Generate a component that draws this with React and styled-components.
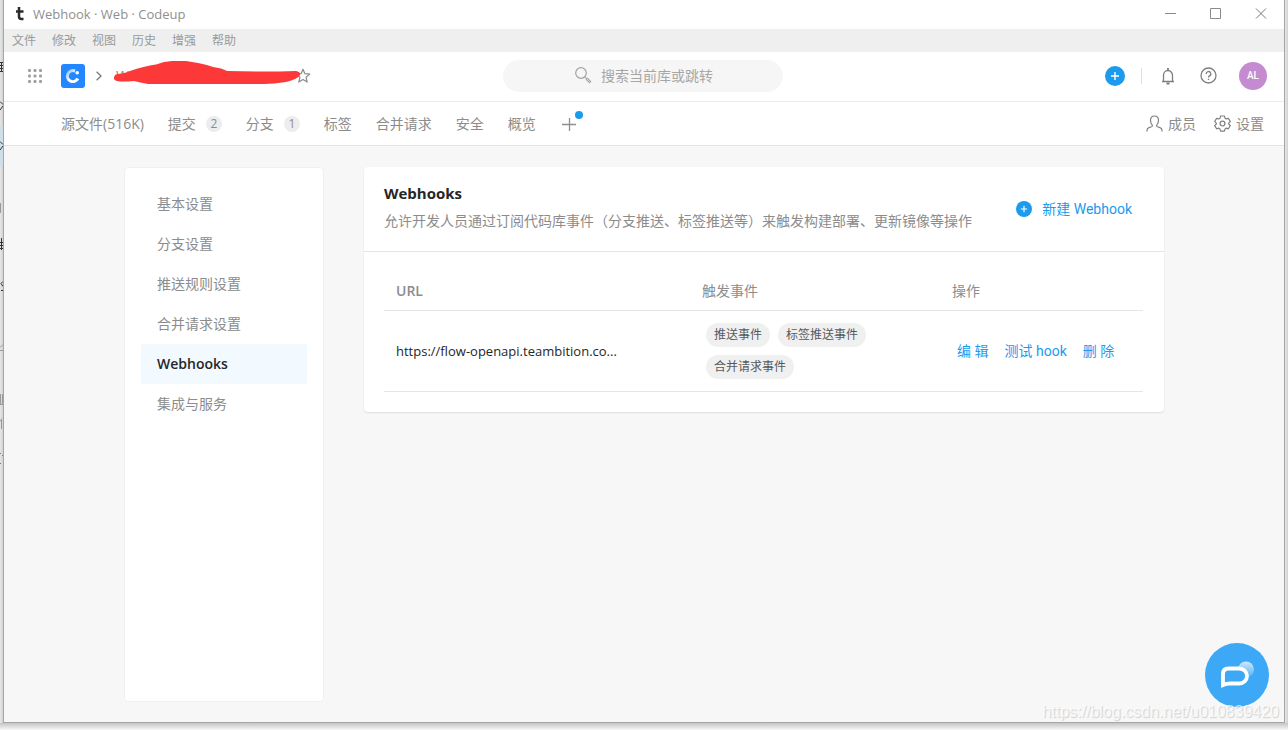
import React, { useState } from 'react';
import styled, { createGlobalStyle } from 'styled-components';

const GlobalStyle = createGlobalStyle`
  * {
    box-sizing: border-box;
  }
  body {
    margin: 0;
    background: #e6e6e6;
    color: #8c8c8c;
    font-family: 'Open Sans', 'Noto Sans CJK SC', sans-serif;
    font-size: 14px;
    line-height: 20px;
  }
  button, input {
    font: inherit;
    color: inherit;
    padding: 0;
    border: none;
    background: none;
  }
  button {
    cursor: pointer;
  }
  a {
    color: inherit;
    text-decoration: none;
  }
  h1, p {
    margin: 0;
  }
`;

const Desktop = styled.div`
  display: grid;
  grid-template-columns: 3px 1fr 3px;
  min-height: 100vh;
  padding-bottom: 7px;
  background: linear-gradient(to top, #f8f8f8, #c4c4c4 7px, #e2e2e2 7px);
`;

const BehindWindow = styled.div`
  overflow: hidden;
  background: linear-gradient(to right, #e6e6e6, #d2d2d2);
`;

const Window = styled.div`
  position: relative;
  display: flex;
  flex-direction: column;
  min-width: 0;
  border: 1px solid #a6a6a6;
  border-top: none;
  background: #f7f7f7;
`;

const TitleBar = styled.div`
  display: flex;
  align-items: center;
  height: 29px;
  padding: 0 17px 2px 12px;
  background: #fff;
  color: #8f8f8f;
  font-size: 13px;
`;

const AppMark = styled.svg`
  width: 8px;
  height: 14px;
  margin-right: 9px;
`;

const WindowButtons = styled.div`
  display: flex;
  gap: 34px;
  margin-left: auto;
`;

const IconButton = styled.button`
  display: flex;
  align-items: center;
`;

const MenuBar = styled.nav`
  display: flex;
  align-items: center;
  gap: 16px;
  height: 23px;
  padding: 0 8px;
  background: #efefef;
  color: #9a9a9a;
  font-size: 12px;
`;

const Header = styled.header`
  display: grid;
  grid-template-columns: 1fr 280px 1fr;
  align-items: center;
  height: 50px;
  padding: 0 17px 2px 15px;
  border-bottom: 1px solid #ebebeb;
  background: #fff;
`;

const Breadcrumb = styled.div`
  display: flex;
  align-items: center;
  padding-left: 9px;
`;

const CodeupLogo = styled.svg`
  width: 24px;
  height: 24px;
  margin: 0 11px 0 19px;
`;

const RepoName = styled.div`
  position: relative;
  display: flex;
  align-items: center;
  height: 28px;
  width: 195px;
  margin-left: 14px;
`;

const Scribble = styled.svg`
  position: absolute;
  left: -2px;
  top: -2px;
`;

const StarButton = styled(IconButton)`
  margin-left: auto;
`;

const SearchBox = styled.label`
  display: flex;
  align-items: center;
  gap: 9px;
  height: 32px;
  padding-left: 72px;
  border-radius: 16px;
  background: #f6f6f6;
  color: #a6a6a6;
`;

const SearchInput = styled.input`
  flex: 1;
  min-width: 0;
  outline: none;
  &::placeholder {
    color: #a6a6a6;
    opacity: 1;
  }
`;

const HeaderTools = styled.div`
  display: flex;
  align-items: center;
  justify-content: flex-end;
`;

const Divider = styled.div`
  width: 1px;
  height: 16px;
  margin: 0 18px 0 16px;
  background: #e0e0e0;
`;

const Avatar = styled.button`
  width: 28px;
  height: 28px;
  margin-left: 22px;
  border-radius: 50%;
  background: #c48bd0;
  color: #fff;
  font-family: Roboto, sans-serif;
  font-size: 10px;
  font-weight: 500;
`;

const HelpButton = styled(IconButton)`
  margin-left: 24px;
`;

const TabBar = styled.nav`
  display: flex;
  align-items: center;
  gap: 24px;
  height: 44px;
  padding: 0 20px 0 57px;
  border-bottom: 1px solid #e3e3e3;
  background: #fff;
`;

const Tab = styled.a`
  display: flex;
  align-items: center;
`;

const Count = styled.span`
  min-width: 16px;
  height: 16px;
  margin-left: 10px;
  border-radius: 8px;
  background: #ededed;
  font-size: 12px;
  line-height: 16px;
  text-align: center;
`;

const AddTab = styled.button`
  position: relative;
  display: flex;
  margin-left: 2px;
`;

const NewDot = styled.span`
  position: absolute;
  top: -6px;
  right: -7px;
  width: 8px;
  height: 8px;
  border-radius: 50%;
  background: #1b9aee;
`;

const TabTools = styled.div`
  display: flex;
  gap: 18px;
  margin-left: auto;
`;

const ToolLink = styled.a`
  display: flex;
  align-items: center;
  gap: 5px;
`;

const Page = styled.div`
  flex: 1;
  display: flex;
  gap: 40px;
  width: 100%;
  max-width: 1040px;
  margin: 0 auto;
  padding: 21px 0 20px;
`;

const Sidebar = styled.nav`
  width: 200px;
  padding: 16px;
  border: 1px solid #f0f0f0;
  border-radius: 4px;
  background: #fff;
`;

const SidebarLink = styled.a`
  display: block;
  padding: 10px 16px;
  border-radius: 3px;
  background: ${({ $active }) => ($active ? '#f2faff' : 'transparent')};
  color: ${({ $active }) => ($active ? '#262626' : 'inherit')};
  font-weight: ${({ $active }) => ($active ? 600 : 400)};
`;

const Card = styled.main`
  flex: 1;
  align-self: flex-start;
  min-width: 0;
  border-radius: 4px;
  background: #fff;
  box-shadow: 0 1px 2px rgba(0, 0, 0, 0.1);
`;

const CardHeader = styled.div`
  display: flex;
  align-items: center;
  justify-content: space-between;
  padding: 16px 32px 20px 20px;
  border-bottom: 1px solid #e5e5e5;
`;

const CardTitle = styled.h1`
  margin-bottom: 8px;
  color: #262626;
  font-size: 15px;
  font-weight: 700;
  line-height: 20px;
`;

const NewButton = styled.button`
  display: flex;
  align-items: center;
  gap: 10px;
  margin-top: 4px;
  color: #1b9aee;
  font-family: Roboto, 'Noto Sans CJK SC', sans-serif;
`;

const HookTable = styled.table`
  width: calc(100% - 41px);
  margin: 21px 21px 20px 20px;
  border-collapse: collapse;
  table-layout: fixed;
`;

const HeadCell = styled.th`
  width: ${({ $width }) => $width || 'auto'};
  height: 37px;
  padding: 0 12px;
  border-bottom: 1px solid #e5e5e5;
  font-weight: ${({ $strong }) => ($strong ? 600 : 400)};
  text-align: left;
`;

const Cell = styled.td`
  height: 81px;
  padding: 0 12px;
  border-bottom: 1px solid #e5e5e5;
  color: #262626;
  font-size: 13px;
`;

const Tags = styled.div`
  display: flex;
  flex-wrap: wrap;
  gap: 8px;
  padding: 0 4px;
`;

const Tag = styled.span`
  padding: 0 8px;
  border-radius: 12px;
  background: #f0f0f0;
  color: #595959;
  font-size: 12px;
  line-height: 24px;
`;

const Actions = styled.div`
  display: flex;
  gap: 16px;
  padding-left: 5px;
  color: #1b9aee;
  font-family: Roboto, 'Noto Sans CJK SC', sans-serif;
  font-size: 14px;
  white-space: nowrap;
`;

const ChatButton = styled.button`
  position: absolute;
  right: 15px;
  bottom: 15px;
  width: 64px;
  height: 64px;
  border-radius: 50%;
  background: #3da8f5;
`;

const Watermark = styled.div`
  position: absolute;
  right: 5px;
  bottom: 0;
  color: rgba(255, 255, 255, 0.7);
  font-family: 'Liberation Sans', sans-serif;
  font-size: 16px;
  text-shadow: 1px 1px 1px rgba(0, 0, 0, 0.16);
  pointer-events: none;
`;

const menus = ['文件', '修改', '视图', '历史', '增强', '帮助'];

const tabs = [
  { name: '源文件(516K)' },
  { name: '提交', count: 2 },
  { name: '分支', count: 1 },
  { name: '标签' },
  { name: '合并请求' },
  { name: '安全' },
  { name: '概览' },
];

const settings = ['基本设置', '分支设置', '推送规则设置', '合并请求设置', 'Webhooks', '集成与服务'];

const hooks = [
  {
    url: 'https://flow-openapi.teambition.co...',
    events: ['推送事件', '标签推送事件', '合并请求事件'],
  },
];

const PlusCircle = ({ size }) => (
  <svg width={size} height={size} viewBox="0 0 20 20">
    <circle cx="10" cy="10" r="10" fill="#1b9aee" />
    <path d="M6 10h8M10 6v8" stroke="#fff" strokeWidth="1.4" />
  </svg>
);

// edge of the page that sits under the window
const BehindEdge = () => (
  <svg width="3" height="490" fill="none" strokeWidth="1">
    <rect y="126" width="3" height="40" fill="#cfdfe9" />
    <path d="M0 62.500h3M0 65.500h3M0 68.500h3M0 71.500h3M1.500 62v10M0 242.500h3M0 245.500h3M0 248.500h3M1.500 238v12" stroke="#333" />
    <path d="M0 101.500l3 3M3 106l-3 4M0 141.500l3 3M3 146l-3 4M3 281.500l-2 2 2 3M1 290.500h2" stroke="#333" />
    <path d="M.5 203v10M0 347.500l3-3M0 350.500h3M.5 394v11M2.500 394v11M0 404.500h3M0 421.500l2-3M1.500 420v9" stroke="#999" />
    <path d="M0 453.500h1M2 455.500h1M0 463.500h1" stroke="#3a8ac4" />
  </svg>
);

const WindowTitle = () => (
  <TitleBar>
    <AppMark viewBox="0 0 8 14">
      <path d="M3 0v9.500q0 2.500 2.500 2.500H7.500M0 4.500h7.500" fill="none" stroke="#2b2b2b" strokeWidth="2.500" />
    </AppMark>
    Webhook · Web · Codeup
    <WindowButtons>
      <IconButton aria-label="最小化">
        <svg width="11" height="11"><path d="M0 5.500h11" stroke="#8a8a8a" /></svg>
      </IconButton>
      <IconButton aria-label="最大化">
        <svg width="11" height="11"><path d="M.5.5h10v10H.5z" fill="none" stroke="#8a8a8a" /></svg>
      </IconButton>
      <IconButton aria-label="关闭">
        <svg width="12" height="11"><path d="M1 .5l10 10M11 .5l-10 10" stroke="#7a7a7a" /></svg>
      </IconButton>
    </WindowButtons>
  </TitleBar>
);

const AppHeader = () => {
  const [keyword, setKeyword] = useState('');

  return (
    <Header>
      <Breadcrumb>
        <IconButton aria-label="应用">
          <svg width="14" height="14" fill="#a0a0a0">
            {[0, 5.5, 11].map((y) => [0, 5.5, 11].map((x) => (
              <rect key={`${x}-${y}`} x={x} y={y} width="3" height="3" rx="1" />
            )))}
          </svg>
        </IconButton>
        <CodeupLogo viewBox="0 0 24 24">
          <defs>
            <linearGradient id="codeup" x1="0" y1="0" x2="1" y2="1">
              <stop offset="0" stopColor="#fff" stopOpacity="0.45" />
              <stop offset="0.500" stopColor="#fff" />
            </linearGradient>
          </defs>
          <rect width="24" height="24" rx="3" fill="#2388ff" />
          <path d="M14 7A5.500 5.500 0 1 0 16.800 14.500" fill="none" stroke="url(#codeup)" strokeWidth="3" />
          <circle cx="16.200" cy="8.800" r="1.800" fill="#fff" />
        </CodeupLogo>
        <svg width="6" height="10" fill="none" stroke="#7a7a7a" strokeWidth="1.300"><path d="M.6.8L5 5L.6 9.200" /></svg>
        <RepoName>
          W
          <StarButton aria-label="收藏">
            <svg width="16" height="16" fill="none" stroke="#8a8a8a" strokeWidth="1.200" strokeLinejoin="round">
              <path d="M8 1.200l1.900 4.500 4.900.4-3.700 3.200 1.100 4.800L8 11.500l-4.200 2.600 1.100-4.800L1.200 6.100l4.900-.4z" />
            </svg>
          </StarButton>
          <Scribble width="190" height="28">
            <path d="M4 14Q12 13 16 11Q30 6 42 4.500Q50 1 58 1H72L84 3Q94 5 99 7Q108 8 113 11Q150 12 182 11Q187 12 186 15Q184 19 172 22Q160 24 150 24H34Q28 23 20 21Q8 22 3 21Q-1 20 0 17Q1 14 4 14Z" fill="#fc3838" />
          </Scribble>
        </RepoName>
      </Breadcrumb>
      <SearchBox>
        <svg width="17" height="17" fill="none" stroke="#a3a3a3">
          <circle cx="6" cy="6" r="5.300" strokeWidth="1.200" />
          <path d="M9.800 9.800l1.800 1.800" strokeWidth="1.200" />
          <path d="M11.500 11.500l4 4" strokeWidth="2.600" />
          <path d="M11.800 11.800l3.400 3.400" stroke="#eee" strokeWidth=".7" />
        </svg>
        <SearchInput
          type="text"
          aria-label="搜索"
          placeholder="搜索当前库或跳转"
          value={keyword}
          onChange={(e) => setKeyword(e.target.value)}
        />
      </SearchBox>
      <HeaderTools>
        <IconButton aria-label="新建"><PlusCircle size={20} /></IconButton>
        <Divider />
        <IconButton aria-label="通知">
          <svg width="16" height="18" fill="none" stroke="#7f7f7f" strokeWidth="1.300">
            <path d="M2 14.500h12M3.500 14.500V8.500a4.500 5 0 0 1 9 0v6" />
            <path d="M8 1v2.500M6.500 16.500h3" strokeWidth="1.800" />
          </svg>
        </IconButton>
        <HelpButton aria-label="帮助">
          <svg width="17" height="17" fill="none" stroke="#7f7f7f" strokeWidth="1.300">
            <circle cx="8.500" cy="8.500" r="7.500" />
            <path d="M6.200 6.900a2.300 2.300 0 1 1 3.300 2q-1 .6-1 1.700M8.500 11.800v1.300" />
          </svg>
        </HelpButton>
        <Avatar>AL</Avatar>
      </HeaderTools>
    </Header>
  );
};

const Tabs = () => (
  <TabBar>
    {tabs.map((tab) => (
      <Tab key={tab.name} href="#">
        {tab.name}
        {tab.count && <Count>{tab.count}</Count>}
      </Tab>
    ))}
    <AddTab aria-label="添加">
      <svg width="14" height="14"><path d="M0 7.500h14M7.500 1v13" stroke="#8f8f8f" strokeWidth="1.300" /></svg>
      <NewDot />
    </AddTab>
    <TabTools>
      <ToolLink href="#">
        <svg width="17" height="17" fill="none" stroke="#808080" strokeWidth="1.200">
          <path d="M1 16.500v-1.200q0-2 2-2.700l2.500-.8q1.300-.5.700-1.700Q4.500 8 4.500 5.300 4.500 1 8.500 1t4 4.300q0 2.700-1.700 4.800-.6 1.200.7 1.700l2.500.8q2 .7 2 2.700v1.200" />
        </svg>
        成员
      </ToolLink>
      <ToolLink href="#">
        <svg width="17" height="17" fill="none" stroke="#808080" strokeWidth="1.200" strokeLinejoin="round">
          <path d="M6.600 1h3.800l.6 2.200 1.200.7 2.200-.6 1.900 3.300-1.600 1.600v.8l1.600 1.600-1.900 3.200-2.200-.6-1.200.7-.6 2.200H6.600L6 13.900l-1.200-.7-2.200.6L.7 10.600 2.300 9v-.8L.7 6.600l1.900-3.300 2.200.6L6 3.200z" />
          <circle cx="8.500" cy="8.600" r="2.400" />
        </svg>
        设置
      </ToolLink>
    </TabTools>
  </TabBar>
);

const WebhookCard = () => (
  <Card>
    <CardHeader>
      <div>
        <CardTitle>Webhooks</CardTitle>
        <p>允许开发人员通过订阅代码库事件（分支推送、标签推送等）来触发构建部署、更新镜像等操作</p>
      </div>
      <NewButton>
        <PlusCircle size={16} />
        新建 Webhook
      </NewButton>
    </CardHeader>
    <HookTable>
      <thead>
        <tr>
          <HeadCell $strong>URL</HeadCell>
          <HeadCell $width="250px">触发事件</HeadCell>
          <HeadCell $width="203px">操作</HeadCell>
        </tr>
      </thead>
      <tbody>
        {hooks.map((hook) => (
          <tr key={hook.url}>
            <Cell>{hook.url}</Cell>
            <Cell>
              <Tags>
                {hook.events.map((event) => <Tag key={event}>{event}</Tag>)}
              </Tags>
            </Cell>
            <Cell>
              <Actions>
                <button>编 辑</button>
                <button>测试 hook</button>
                <button>删 除</button>
              </Actions>
            </Cell>
          </tr>
        ))}
      </tbody>
    </HookTable>
  </Card>
);

const App = () => {
  const [current, setCurrent] = useState('Webhooks');

  return (
    <>
      <GlobalStyle />
      <Desktop>
        <BehindWindow>
          <BehindEdge />
        </BehindWindow>
        <Window>
          <WindowTitle />
          <MenuBar>
            {menus.map((menu) => <button key={menu}>{menu}</button>)}
          </MenuBar>
          <AppHeader />
          <Tabs />
          <Page>
            <Sidebar>
              {settings.map((item) => (
                <SidebarLink
                  key={item}
                  href="#"
                  $active={item === current}
                  onClick={() => setCurrent(item)}
                >
                  {item}
                </SidebarLink>
              ))}
            </Sidebar>
            <WebhookCard />
          </Page>
          <ChatButton aria-label="客服">
            <svg width="64" height="64" viewBox="0 0 64 64">
              <defs>
                <linearGradient id="bubble" x1="0" y1="0" x2="0" y2="1">
                  <stop offset="0" stopColor="#fff" stopOpacity="0.75" />
                  <stop offset="1" stopColor="#fff" stopOpacity="0.1" />
                </linearGradient>
              </defs>
              <circle cx="41" cy="26.500" r="8" fill="url(#bubble)" />
              <path d="M18 41.500V31q0-5.500 5.500-5.500H34a8 7.500 0 0 1 0 15H25q-4 0-7 1.500z" fill="#3da8f5" stroke="#fff" strokeWidth="3.800" />
            </svg>
          </ChatButton>
          <Watermark>https://blog.csdn.net/u010839420</Watermark>
        </Window>
        <BehindWindow />
      </Desktop>
    </>
  );
};

export default App;
